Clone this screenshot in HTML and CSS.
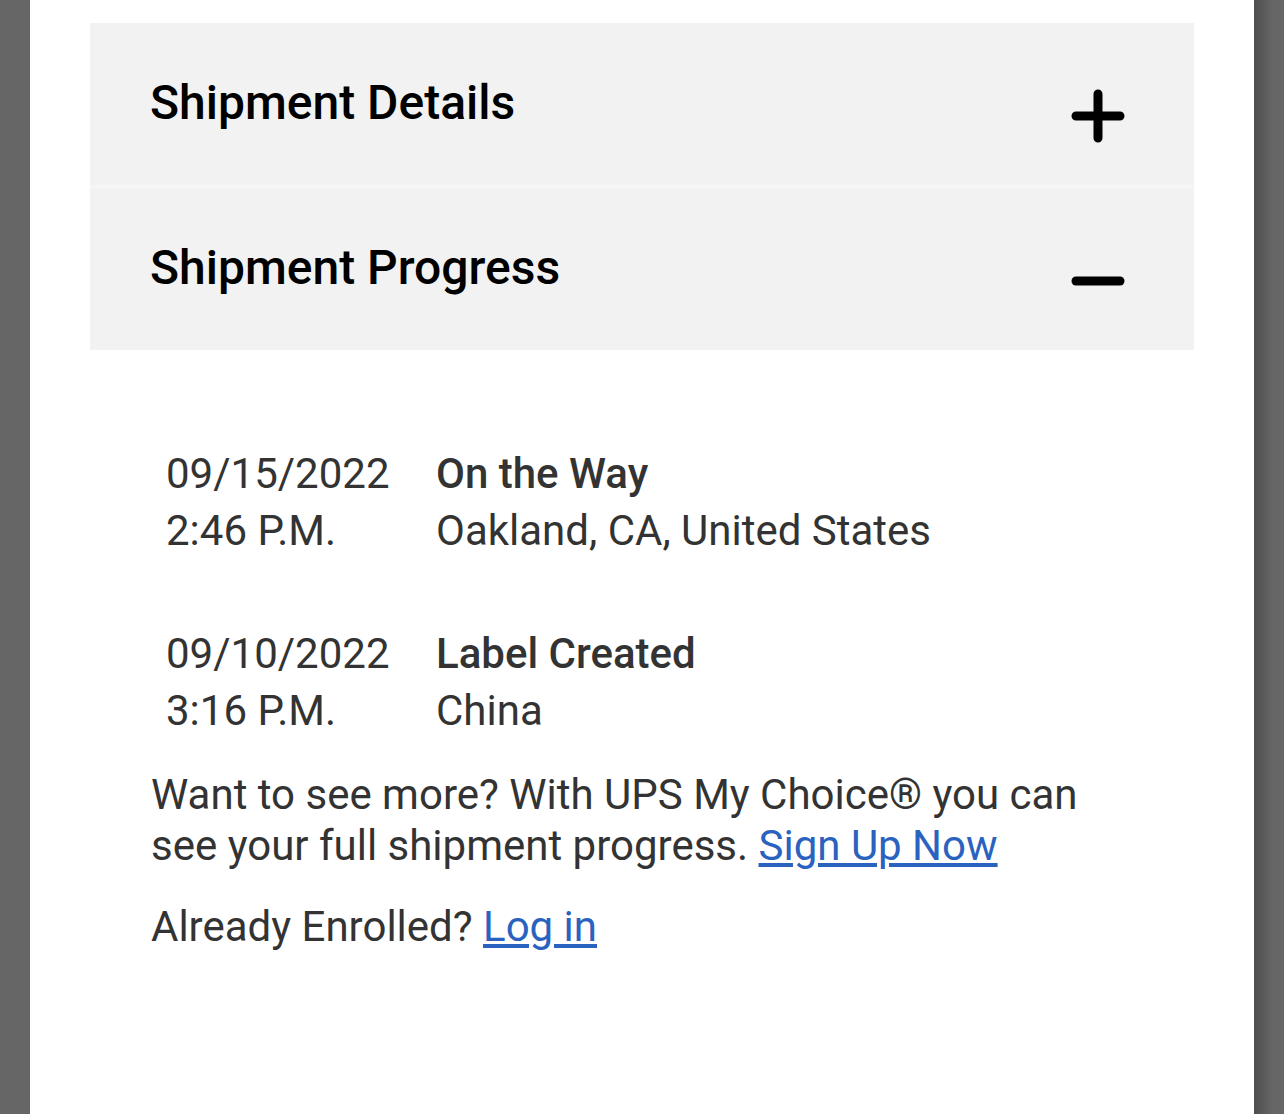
FILE: index.html
```html
<!DOCTYPE html>
<html>
<head>
<meta charset="utf-8">
<link rel="stylesheet" href="styles.css">
</head>
<body>
<div class="frame">
  <div class="side side-left"></div>
  <main class="page">
    <section class="panel">
      <h2 class="panel-title">Shipment Details</h2>
      <svg class="toggle" width="54" height="54" viewBox="0 0 54 54"><path d="M5 27H49M27 5V49" stroke="#000" stroke-width="9" stroke-linecap="round"/></svg>
    </section>
    <section class="panel">
      <h2 class="panel-title">Shipment Progress</h2>
      <svg class="toggle" width="54" height="54" viewBox="0 0 54 54"><path d="M5 27H49" stroke="#000" stroke-width="9" stroke-linecap="round"/></svg>
    </section>
    <div class="progress">
      <div class="event">
        <div class="when">09/15/2022<br>2:46 P.M.</div>
        <div class="what"><strong>On the Way</strong><br>Oakland, CA, United States</div>
      </div>
      <div class="event">
        <div class="when">09/10/2022<br>3:16 P.M.</div>
        <div class="what"><strong>Label Created</strong><br>China</div>
      </div>
      <p class="note">Want to see more? With UPS My Choice® you can see your full shipment progress. <a href="#">Sign Up Now</a></p>
      <p class="note">Already Enrolled? <a href="#">Log in</a></p>
    </div>
  </main>
  <div class="side side-right"></div>
</div>
</body>
</html>
```
FILE: styles.css
```css
html, body {
  margin: 0;
  padding: 0;
  height: 100%;
}
body {
  font-family: Roboto, "Noto Sans", sans-serif;
  background: #666;
}
.frame {
  display: flex;
  height: 1114px;
  overflow: hidden;
}
.side {
  width: 30px;
  flex: none;
  background: #666;
}
.side-right {
  background: linear-gradient(to right, #4d4d4d, #666 60%);
}
.page {
  flex: 1;
  background: #fff;
  padding: 23px 60px 0;
}
.panel {
  background: #f2f2f2;
  height: 162px;
  display: flex;
  align-items: flex-start;
  justify-content: space-between;
  padding: 0 69px 0 60px;
  box-sizing: border-box;
}
.panel + .panel {
  margin-top: 3px;
  box-shadow: 0 -3px 0 #f6f6f6;
}
.panel-title {
  margin: 52px 0 0;
  font-size: 48px;
  font-weight: 500;
  color: #000;
  line-height: 56px;
}
.toggle {
  margin-top: 66px;
}
.progress {
  padding: 95px 0 0 61px;
  color: #333;
  font-size: 42px;
}
.event {
  display: flex;
  line-height: 57px;
  margin-bottom: 66px;
  padding-left: 15px;
}
.event:last-of-type {
  margin-bottom: 30px;
}
.when {
  width: 270px;
}
.what strong {
  font-weight: 500;
}
.note {
  margin: 0 0 30px;
  line-height: 51px;
  width: 960px;
}
.note a {
  color: #2a62c0;
}
```
